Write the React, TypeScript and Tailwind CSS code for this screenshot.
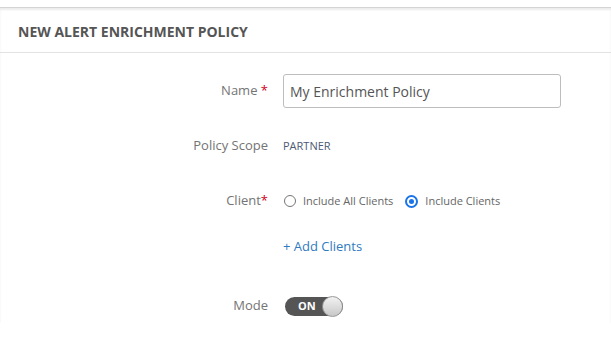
import React from "react";

const Label: React.FC<{ children: React.ReactNode }> = ({ children }) => (
  <div className="w-[268px] shrink-0 text-right text-[13px] text-[#747474]">{children}</div>
);

export default function App() {
  return (
    <div className="h-[344px] w-[611px] overflow-hidden bg-white" style={{ fontFamily: '"Open Sans", sans-serif' }}>
      <div className="h-[7px] bg-white" />
      <div className="border-t border-[#d4d4d4] shadow-[inset_0_2px_2px_rgba(0,0,0,0.08)]">
        <div className="flex h-[45px] items-center border-b border-[#e2e2e2] pl-[18px] pt-[3px]">
          <h1 className="text-[14px] font-bold uppercase text-[#555]">New Alert Enrichment Policy</h1>
        </div>

        <div className="pt-[21px]">
          <div className="flex h-[34px] items-center gap-[15px]">
            <Label>
              Name <span className="text-[#d0021b]">*</span>
            </Label>
            <input
              className="h-[34px] w-[278px] rounded-[3px] border border-[#bdbdbd] px-[6px] text-[14px] text-[#555] outline-none"
              defaultValue="My Enrichment Policy"
            />
          </div>

          <div className="mt-[21px] flex h-[34px] items-center gap-[15px]">
            <Label>Policy Scope</Label>
            <span className="text-[11px] text-[#4d5a75]">PARTNER</span>
          </div>

          <div className="mt-[21px] flex h-[34px] items-center gap-[16px]">
            <Label>
              Client<span className="text-[#d0021b]">*</span>
            </Label>
            <div className="flex items-center gap-[12px]">
              <label className="flex items-center gap-[7px] text-[11px] text-[#666]">
                <span className="h-[12px] w-[12px] rounded-full border border-[#767676] bg-white" />
                Include All Clients
              </label>
              <label className="flex items-center gap-[7px] text-[11px] text-[#666]">
                <span className="flex h-[13px] w-[13px] items-center justify-center rounded-full border-2 border-[#1a73e8] bg-white">
                  <span className="h-[5px] w-[5px] rounded-full bg-[#1a73e8]" />
                </span>
                Include Clients
              </label>
            </div>
          </div>

          <div className="mt-[12px] flex h-[34px] items-center gap-[15px]">
            <div className="w-[268px] shrink-0" />
            <a className="text-[13px] text-[#2f7bbf]" href="#">+ Add Clients</a>
          </div>

          <div className="mt-[25px] flex h-[34px] items-center gap-[17px]">
            <Label>Mode</Label>
            <div className="relative flex h-[19px] w-[58px] items-center rounded-full bg-[#555] pl-[13px]">
              <span className="text-[11px] font-bold text-white">ON</span>
              <span className="absolute right-0 top-[-1px] h-[21px] w-[21px] rounded-full border border-[#999] bg-gradient-to-b from-[#f2f2f2] to-[#c8c8c8]" />
            </div>
          </div>
        </div>
      </div>
    </div>
  );
}
